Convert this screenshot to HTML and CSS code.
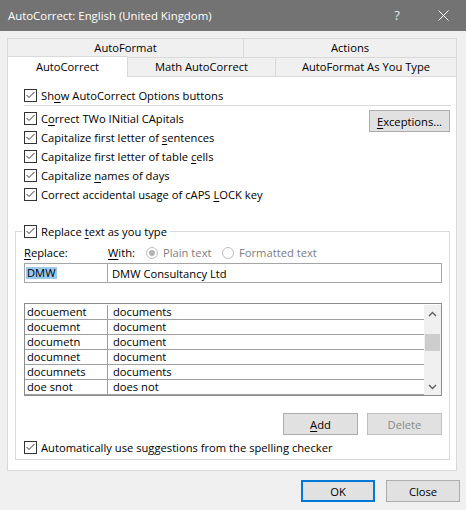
FILE: index.html
```html
<!DOCTYPE html>
<html>
<head>
<meta charset="utf-8">
<title>AutoCorrect</title>
<link rel="stylesheet" href="styles.css">
</head>
<body>
<div class="titlebar">
  <div class="title">AutoCorrect: English (United Kingdom)</div>
  <div class="tbtn help">?</div>
  <div class="tbtn close"><svg width="11" height="11" viewBox="0 0 11 11"><path d="M0.5 0.5L10.5 10.5M10.5 0.5L0.5 10.5" stroke="#fff" stroke-width="1" fill="none"/></svg></div>
</div>
<div class="dialog">
  <div class="tabs">
    <div class="tabrow">
      <div class="tab t-autoformat">AutoFormat</div>
      <div class="tab t-actions">Actions</div>
    </div>
    <div class="tabrow">
      <div class="tab t-autocorrect selected">AutoCorrect</div>
      <div class="tab t-math">Math AutoCorrect</div>
      <div class="tab t-afayt">AutoFormat As You Type</div>
    </div>
  </div>
  <div class="panel">
    <div class="top">
      <div class="check"><svg class="cb" viewBox="0 0 13 13"><rect x="0.5" y="0.5" width="12" height="12" fill="#fff" stroke="#333"/><path d="M2.5 6 5 8.5 10.5 3" fill="none" stroke="#333"/></svg><span>Sh<u>o</u>w AutoCorrect Options buttons</span></div>
      <div class="sep"></div>
      <div class="opts">
        <div class="optlist">
          <div class="check"><svg class="cb" viewBox="0 0 13 13"><rect x="0.5" y="0.5" width="12" height="12" fill="#fff" stroke="#333"/><path d="M2.5 6 5 8.5 10.5 3" fill="none" stroke="#333"/></svg><span>C<u>o</u>rrect TWo INitial CApitals</span></div>
          <div class="check"><svg class="cb" viewBox="0 0 13 13"><rect x="0.5" y="0.5" width="12" height="12" fill="#fff" stroke="#333"/><path d="M2.5 6 5 8.5 10.5 3" fill="none" stroke="#333"/></svg><span>Capitalize first letter of <u>s</u>entences</span></div>
          <div class="check"><svg class="cb" viewBox="0 0 13 13"><rect x="0.5" y="0.5" width="12" height="12" fill="#fff" stroke="#333"/><path d="M2.5 6 5 8.5 10.5 3" fill="none" stroke="#333"/></svg><span>Capitalize first letter of table <u>c</u>ells</span></div>
          <div class="check"><svg class="cb" viewBox="0 0 13 13"><rect x="0.5" y="0.5" width="12" height="12" fill="#fff" stroke="#333"/><path d="M2.5 6 5 8.5 10.5 3" fill="none" stroke="#333"/></svg><span>Capitalize <u>n</u>ames of days</span></div>
          <div class="check"><svg class="cb" viewBox="0 0 13 13"><rect x="0.5" y="0.5" width="12" height="12" fill="#fff" stroke="#333"/><path d="M2.5 6 5 8.5 10.5 3" fill="none" stroke="#333"/></svg><span>Correct accidental usage of cAPS <u>L</u>OCK key</span></div>
        </div>
        <div class="btn btn-exc"><span><u>E</u>xceptions...</span></div>
      </div>
    </div>
    <fieldset class="group">
      <legend class="legend"><div class="check"><svg class="cb" viewBox="0 0 13 13"><rect x="0.5" y="0.5" width="12" height="12" fill="#fff" stroke="#333"/><path d="M2.5 6 5 8.5 10.5 3" fill="none" stroke="#333"/></svg><span>Replace <u>t</u>ext as you type</span></div></legend>
      <div class="labels">
        <div class="l-replace"><u>R</u>eplace:</div>
        <div class="l-with"><u>W</u>ith:</div>
        <div class="radio r-plain"><span class="rd on"></span><span>Plain text</span></div>
        <div class="radio"><span class="rd"></span><span>Formatted text</span></div>
      </div>
      <div class="inputs">
        <div class="in in-replace"><span class="selected-text">DMW</span></div>
        <div class="in in-with"><span>DMW Consultancy Ltd</span></div>
      </div>
      <div class="list">
        <div class="rows">
          <div class="row"><div class="c1">docuement</div><div class="c2">documents</div></div>
          <div class="row"><div class="c1">docuemnt</div><div class="c2">document</div></div>
          <div class="row"><div class="c1">documetn</div><div class="c2">document</div></div>
          <div class="row"><div class="c1">documnet</div><div class="c2">document</div></div>
          <div class="row"><div class="c1">documnets</div><div class="c2">documents</div></div>
          <div class="row"><div class="c1">doe snot</div><div class="c2">does not</div></div>
        </div>
        <div class="sb">
          <div class="arrow"><svg width="9" height="6" viewBox="0 0 9 6"><path d="M1 5 4.5 1.5 8 5" fill="none" stroke="#606060" stroke-width="1.4"/></svg></div>
          <div class="thumb"></div>
          <div class="sb-space"></div>
          <div class="arrow"><svg width="9" height="6" viewBox="0 0 9 6"><path d="M1 1 4.5 4.5 8 1" fill="none" stroke="#606060" stroke-width="1.4"/></svg></div>
        </div>
      </div>
      <div class="actions">
        <div class="btn btn-sm"><span><u>A</u>dd</span></div>
        <div class="btn btn-sm disabled"><span>Delete</span></div>
      </div>
      <div class="check auto"><svg class="cb" viewBox="0 0 13 13"><rect x="0.5" y="0.5" width="12" height="12" fill="#fff" stroke="#333"/><path d="M2.5 6 5 8.5 10.5 3" fill="none" stroke="#333"/></svg><span>Automatically use su<u>g</u>gestions from the spelling checker</span></div>
    </fieldset>
  </div>
  <div class="footer">
    <div class="btn btn-foot default"><span>OK</span></div>
    <div class="btn btn-foot"><span>Close</span></div>
  </div>
</div>
</body>
</html>
```
FILE: styles.css
```css
* { box-sizing: border-box; }
html, body { margin: 0; padding: 0; }
body {
  width: 466px;
  height: 510px;
  overflow: hidden;
  background: #f0f0f0;
  font-family: "Open Sans", "Noto Sans", sans-serif;
  font-size: 11.2px;
  line-height: 19px;
  color: #000;
}
u {
  text-decoration: underline;
  text-decoration-thickness: 1px;
  text-underline-offset: 2px;
}

/* title bar */
.titlebar {
  height: 31px;
  background: #737373;
  color: #fff;
  display: flex;
  align-items: center;
}
.title { flex: 1; padding-left: 8px; font-size: 11.4px; }
.tbtn {
  width: 46px;
  height: 31px;
  display: flex;
  align-items: center;
  justify-content: center;
}
.help { color: #e8e8e8; font-size: 13px; }

/* dialog body */
.dialog { padding: 7px 6px 0 7px; }

.tabs { width: 450px; }
.tabrow { display: flex; height: 19px; }
.tab {
  height: 19px;
  border: 1px solid #d9d9d9;
  border-bottom: none;
  background: #f0f0f0;
  text-align: center;
  line-height: 18px;
  margin-left: -1px;
  flex: none;
}
.tab:first-child { margin-left: 0; }
.t-autoformat { width: 237px; }
.t-actions { width: 214px; }
.t-autocorrect { width: 121px; }
.t-math { width: 149px; }
.t-afayt { width: 182px; }
.tab.selected {
  margin-top: -1px;
  height: 21px;
  line-height: 20px;
  background: #fff;
  position: relative;
  z-index: 1;
}

.panel {
  width: 450px;
  border: 1px solid #d9d9d9;
  background: #fff;
  padding: 9px 6px 10px 7px;
}

.top { padding-left: 9px; }
.check {
  display: flex;
  align-items: center;
  height: 19px;
  white-space: nowrap;
}
.cb { width: 13px; height: 13px; margin-right: 4px; flex: none; }
.sep { height: 1px; background: #d7d7d7; margin-right: -1px; }
.opts {
  display: flex;
  justify-content: space-between;
  align-items: flex-start;
  margin-top: 3px;
}
.btn {
  height: 22px;
  border: 1px solid #adadad;
  background: #e1e1e1;
  display: flex;
  align-items: center;
  justify-content: center;
  flex: none;
}
.btn-exc { width: 81px; margin-top: 1px; }

/* group box */
.group {
  margin: 18px 0 0;
  padding: 0 7px 2px 8px;
  border: 1px solid #d9d9d9;
  min-width: 0;
}
.legend { padding: 0 3px 0 2px; margin-left: -2px; }

.labels {
  display: flex;
  align-items: center;
  height: 21px;
  margin-top: 1px;
  white-space: nowrap;
}
.l-replace { width: 84px; }
.l-with { width: 38px; }
.radio {
  display: flex;
  align-items: center;
  color: #7d7d7d;
}
.r-plain { width: 76px; }
.rd {
  width: 12px;
  height: 12px;
  border: 1px solid #bcbcbc;
  border-radius: 50%;
  background: #fff;
  margin-right: 5px;
  display: flex;
  align-items: center;
  justify-content: center;
  flex: none;
}
.rd.on::after {
  content: "";
  width: 6px;
  height: 6px;
  border-radius: 50%;
  background: #b4b4b4;
}

.inputs { display: flex; height: 20px; }
.in {
  height: 20px;
  border: 1px solid #a5a5a5;
  background: #fff;
  display: flex;
  align-items: center;
  white-space: nowrap;
}
.in-replace { width: 84px; padding-left: 1px; }
.in-with { width: 335px; margin-left: -1px; padding-left: 4px; }
.selected-text {
  background: #99c9ef;
  line-height: 12px;
  height: 12px;
  padding: 0 1px;
}

.list {
  margin-top: 20px;
  height: 93px;
  border: 1px solid #8c8c8c;
  padding-top: 1px;
  display: flex;
}
.rows { flex: 1; }
.row {
  display: flex;
  height: 15px;
  line-height: 14px;
  border-bottom: 1px solid #a0a0a0;
}
.c1 { width: 83px; border-right: 1px solid #a0a0a0; padding-left: 2px; flex: none; }
.c2 { padding-left: 5px; }

.sb {
  width: 17px;
  background: #f0f0f0;
  display: flex;
  flex-direction: column;
  align-items: center;
}
.arrow {
  height: 17px;
  display: flex;
  align-items: center;
  justify-content: center;
}
.thumb { margin-top: 12px; height: 17px; width: 15px; background: #cdcdcd; }
.sb-space { flex: 1; }

.actions {
  display: flex;
  justify-content: flex-end;
  gap: 9px;
  margin-top: 17px;
}
.btn-sm { width: 75px; }
.btn.disabled { border-color: #bfbfbf; color: #8a8a8a; }
.auto { margin-top: 3px; }

.footer {
  display: flex;
  justify-content: flex-end;
  gap: 11px;
  margin-top: 9px;
}
.btn-foot { width: 74px; }
.btn.default { border: 2px solid #0078d7; }
```
